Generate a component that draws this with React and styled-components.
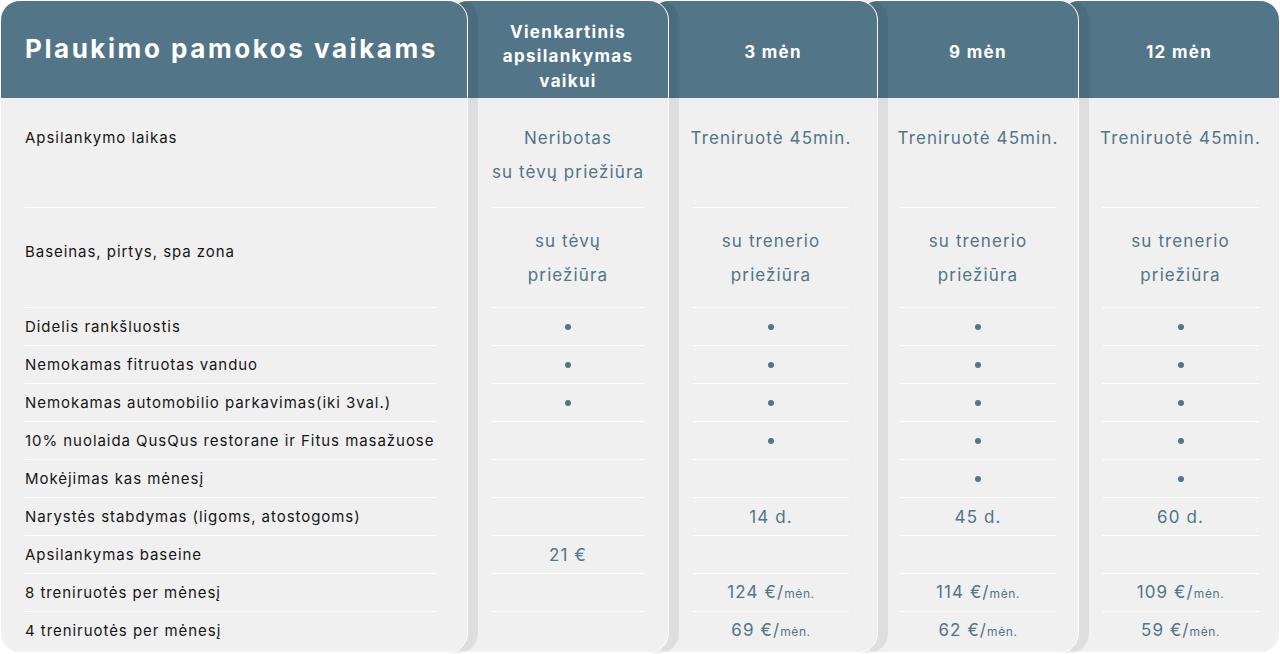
import React from 'react';
import styled, { createGlobalStyle } from 'styled-components';

const BLUE = '#527587';

const Global = createGlobalStyle`
  html, body { margin: 0; padding: 0; background: #fff; }
  body { font-family: Inter, "Noto Sans", sans-serif; -webkit-font-smoothing: antialiased; }
  * { box-sizing: border-box; }
`;

const Table = styled.div`
  display: flex;
  align-items: flex-start;
  width: 1280px;
  height: 654px;
  overflow: hidden;
`;

const Card = styled.div`
  position: relative;
  z-index: ${(p) => p.$z};
  flex: 0 0 auto;
  width: ${(p) => p.$w + (p.$first ? 0 : 20)}px;
  margin-left: ${(p) => (p.$first ? 0 : -20)}px;
  height: 653px;
  border: 1px solid #fff;
  border-radius: 20px;
  background: #f0f0f0;
  box-shadow: ${(p) => (p.$last ? 'none' : '10px 0 0 rgba(0, 0, 0, 0.075)')};
  display: flex;
  flex-direction: column;
  overflow: hidden;
`;

const Header = styled.div`
  flex: 0 0 97px;
  background: ${BLUE};
  color: #fff;
  display: flex;
  align-items: center;
  justify-content: ${(p) => (p.$left ? 'flex-start' : 'center')};
  padding-left: ${(p) => (p.$left ? 24 : 19)}px;
  text-align: center;
`;

const Title = styled.h1`
  margin: 0 0 2px;
  font-size: 26px;
  font-weight: 700;
  letter-spacing: 2.55px;
  white-space: nowrap;
`;

const ColTitle = styled.div`
  font-size: 17px;
  font-weight: 700;
  line-height: 24.5px;
  letter-spacing: 1.3px;
  margin-top: ${(p) => (p.$multi ? 14 : 6)}px;
`;

const Body = styled.div`
  flex: 1 1 auto;
  display: flex;
  flex-direction: column;
  padding-left: ${(p) => (p.$first ? 0 : 19)}px;
`;

const Row = styled.div`
  flex: 0 0 ${(p) => p.$h}px;
  margin: 0 ${(p) => p.$mr}px 0 ${(p) => p.$ml}px;
  border-bottom: ${(p) => (p.$lastRow ? 'none' : '1px solid #fff')};
  display: flex;
  align-items: ${(p) => (p.$top ? 'flex-start' : 'center')};
  justify-content: ${(p) => (p.$label ? 'flex-start' : 'center')};
  padding-top: ${(p) => (p.$top ? 23 : 0)}px;
  padding-bottom: ${(p) => p.$pb || 0}px;
  text-align: center;
`;

const Label = styled.span`
  font-size: 15px;
  line-height: ${(p) => (p.$tall ? 34 : 20)}px;
  letter-spacing: 0.95px;
  color: #161616;
  white-space: nowrap;
`;

const Value = styled.span`
  font-size: 17px;
  line-height: 34px;
  letter-spacing: 1.1px;
  color: ${BLUE};
  white-space: nowrap;
`;

const Small = styled.span`
  font-size: 12px;
  letter-spacing: 0.6px;
`;

const Dot = styled.span`
  width: 6px;
  height: 6px;
  border-radius: 50%;
  background: ${BLUE};
`;

const ROW_H = [110, 100, 38, 38, 38, 38, 38, 38, 38, 38, 38];

const labels = [
  'Apsilankymo laikas',
  'Baseinas, pirtys, spa zona',
  'Didelis rankšluostis',
  'Nemokamas fitruotas vanduo',
  'Nemokamas automobilio parkavimas(iki 3val.)',
  '10% nuolaida QusQus restorane ir Fitus masažuose',
  'Mokėjimas kas mėnesį',
  'Narystės stabdymas (ligoms, atostogoms)',
  'Apsilankymas baseine',
  '8 treniruotės per mėnesį',
  '4 treniruotės per mėnesį',
];

const D = { dot: true };
const P = (n) => ({ price: n });

const columns = [
  {
    title: ['Vienkartinis', 'apsilankymas', 'vaikui'],
    w: 201,
    ml: 24,
    mr: 24,
    cells: [['Neribotas', 'su tėvų priežiūra'], ['su tėvų', 'priežiūra'], D, D, D, '', '', '', '21 €', '', ''],
  },
  {
    title: ['3 mėn'],
    w: 209,
    ml: 24,
    mr: 28,
    cells: [['Treniruotė 45min.'], ['su trenerio', 'priežiūra'], D, D, D, D, '', '14 d.', '', P(124), P(69)],
  },
  {
    title: ['9 mėn'],
    w: 201,
    ml: 22,
    mr: 22,
    cells: [['Treniruotė 45min.'], ['su trenerio', 'priežiūra'], D, D, D, D, D, '45 d.', '', P(114), P(62)],
  },
  {
    title: ['12 mėn'],
    w: 201,
    ml: 23,
    mr: 20,
    cells: [['Treniruotė 45min.'], ['su trenerio', 'priežiūra'], D, D, D, D, D, '60 d.', '', P(109), P(59)],
  },
];

function Cell({ c }) {
  if (c && c.dot) return <Dot />;
  if (c && c.price !== undefined)
    return (
      <Value>
        {c.price} €/<Small>mėn.</Small>
      </Value>
    );
  if (Array.isArray(c))
    return (
      <Value>
        {c.map((l, i) => (
          <React.Fragment key={i}>
            {i > 0 && <br />}
            {l}
          </React.Fragment>
        ))}
      </Value>
    );
  if (c) return <Value>{c}</Value>;
  return null;
}

export default function App() {
  return (
    <>
      <Global />
      <Table>
        <Card $first $w={468} $z={10}>
          <Header $left>
            <Title>Plaukimo pamokos vaikams</Title>
          </Header>
          <Body $first>
            {labels.map((l, i) => (
              <Row
                key={i}
                $label
                $h={ROW_H[i]}
                $ml={24}
                $mr={31}
                $top={i === 0}
                $pb={i === 1 ? 12 : 0}
                $lastRow={i === labels.length - 1}
              >
                <Label $tall={i === 0}>{l}</Label>
              </Row>
            ))}
          </Body>
        </Card>
        {columns.map((col, ci) => (
          <Card key={ci} $w={col.w} $z={9 - ci} $last={ci === columns.length - 1}>
            <Header>
              <ColTitle $multi={col.title.length > 1}>
                {col.title.map((t, i) => (
                  <React.Fragment key={i}>
                    {i > 0 && <br />}
                    {t}
                  </React.Fragment>
                ))}
              </ColTitle>
            </Header>
            <Body>
              {col.cells.map((c, i) => (
                <Row
                  key={i}
                  $h={ROW_H[i]}
                  $ml={col.ml}
                  $mr={col.mr}
                  $top={i === 0}
                  $lastRow={i === col.cells.length - 1}
                >
                  <Cell c={c} />
                </Row>
              ))}
            </Body>
          </Card>
        ))}
      </Table>
    </>
  );
}
